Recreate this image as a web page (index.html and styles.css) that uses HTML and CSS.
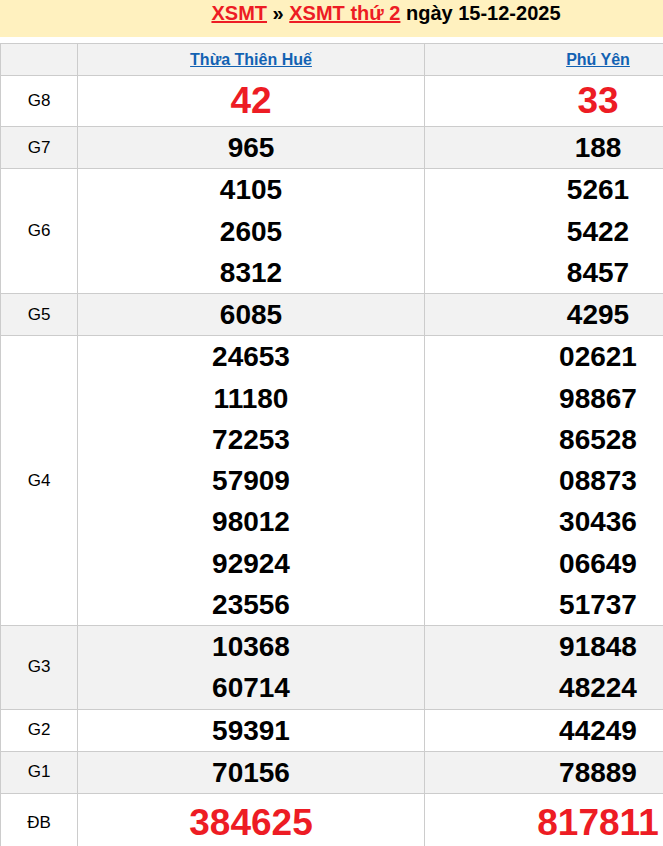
FILE: index.html
```html
<!DOCTYPE html>
<html lang="vi">
<head>
<meta charset="utf-8">
<title>XSMT thứ 2</title>
<link rel="stylesheet" href="styles.css">
</head>
<body>
<div class="page">
  <div class="title-bar">
    <a class="red-link" href="#">XSMT</a> » <a class="red-link" href="#">XSMT thứ 2</a> ngày 15-12-2025
  </div>
  <table class="results">
    <colgroup><col class="c-label"><col class="c-prov"><col class="c-prov"></colgroup>
    <thead>
      <tr class="head-row">
        <th></th>
        <th><a class="prov-link" href="#">Thừa Thiên Huế</a></th>
        <th><a class="prov-link" href="#">Phú Yên</a></th>
      </tr>
    </thead>
    <tbody>
      <tr class="r-g8">
        <td class="label">G8</td>
        <td><div class="num big red">42</div></td>
        <td><div class="num big red">33</div></td>
      </tr>
      <tr class="alt">
        <td class="label">G7</td>
        <td><div class="num">965</div></td>
        <td><div class="num">188</div></td>
      </tr>
      <tr>
        <td class="label">G6</td>
        <td><div class="num">4105</div><div class="num">2605</div><div class="num">8312</div></td>
        <td><div class="num">5261</div><div class="num">5422</div><div class="num">8457</div></td>
      </tr>
      <tr class="alt">
        <td class="label">G5</td>
        <td><div class="num">6085</div></td>
        <td><div class="num">4295</div></td>
      </tr>
      <tr>
        <td class="label">G4</td>
        <td><div class="num">24653</div><div class="num">11180</div><div class="num">72253</div><div class="num">57909</div><div class="num">98012</div><div class="num">92924</div><div class="num">23556</div></td>
        <td><div class="num">02621</div><div class="num">98867</div><div class="num">86528</div><div class="num">08873</div><div class="num">30436</div><div class="num">06649</div><div class="num">51737</div></td>
      </tr>
      <tr class="alt">
        <td class="label">G3</td>
        <td><div class="num">10368</div><div class="num">60714</div></td>
        <td><div class="num">91848</div><div class="num">48224</div></td>
      </tr>
      <tr>
        <td class="label">G2</td>
        <td><div class="num">59391</div></td>
        <td><div class="num">44249</div></td>
      </tr>
      <tr class="alt">
        <td class="label">G1</td>
        <td><div class="num">70156</div></td>
        <td><div class="num">78889</div></td>
      </tr>
      <tr class="r-db">
        <td class="label">ĐB</td>
        <td><div class="num big red">384625</div></td>
        <td><div class="num big red">817811</div></td>
      </tr>
    </tbody>
  </table>
</div>
</body>
</html>
```
FILE: styles.css
```css
html, body {
  margin: 0;
  padding: 0;
  background: #ffffff;
}
body {
  font-family: "Liberation Sans", Arial, sans-serif;
  color: #000;
}
.page {
  width: 772px;
}
.title-bar {
  background: #fff1bf;
  height: 37px;
  box-sizing: border-box;
  padding-top: 1px;
  text-align: center;
  font-size: 20px;
  font-weight: bold;
  line-height: 24px;
  margin-bottom: 6px;
}
.red-link {
  color: #ed1c24;
  text-decoration: underline;
}
.results {
  width: 772px;
  border-collapse: collapse;
  table-layout: fixed;
}
.c-label { width: 77px; }
.c-prov { width: 347px; }
.results th,
.results td {
  border: 1px solid #cccccc;
  padding: 0;
  text-align: center;
  vertical-align: middle;
}
.head-row th {
  background: #f2f2f2;
  height: 31px;
  font-size: 16px;
  font-weight: bold;
}
.prov-link {
  color: #1262b3;
  text-decoration: underline;
}
.alt td { background: #f2f2f2; }
.label {
  font-size: 17px;
}
.num {
  font-size: 28px;
  font-weight: bold;
  line-height: 41.25px;
}
.big {
  font-size: 37px;
  line-height: 50px;
}
.red { color: #ed1c24; }
.r-db .big { line-height: 58px; }
```
